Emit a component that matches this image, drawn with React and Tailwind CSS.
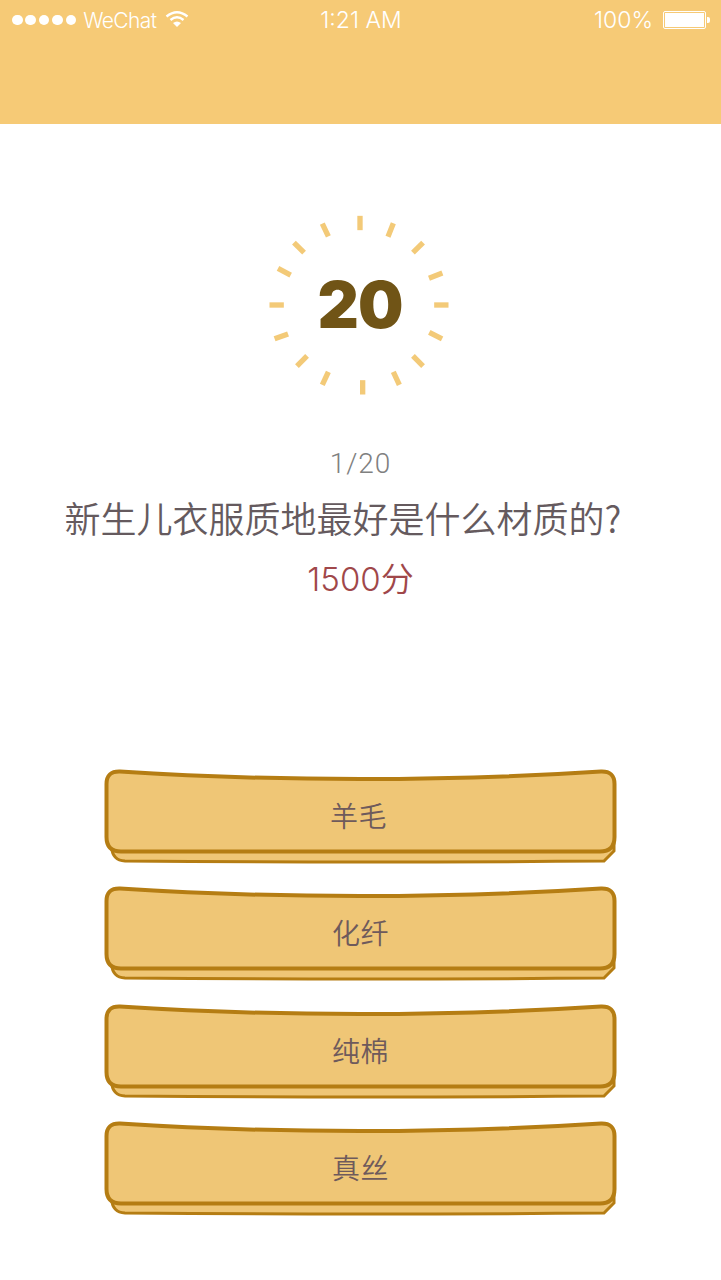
const ticks = [
  [300, 54, 0], [392, 75, 22], [474, 128, 45], [527, 212, 69], [544, 300, 90], [527, 392, 117],
  [474, 468, 135], [409, 520, 155], [308, 547, 180], [196, 520, 205], [126, 468, 225], [64, 394, 250],
  [50, 300, 270], [73, 200, 298], [117, 128, 315], [196, 75, 335],
];

function Timer() {
  return (
    <div className="relative w-[200px] h-[200px] flex items-center justify-center">
      <svg className="absolute inset-0" width="200" height="200" viewBox="0 0 600 600">
        {ticks.map(([x, y, r], i) => (
          <rect key={i} x={x - 8} y={y - 21.5} width="16" height="43" fill="#f3ca78" transform={`rotate(${r} ${x} ${y})`} />
        ))}
      </svg>
      <span className="relative text-[64px] leading-none font-black text-[#705416] tracking-[-1px]" style={{ fontFamily: "Inter, sans-serif" }}>20</span>
    </div>
  );
}

function Answer({ label, labelClass }) {
  return (
    <div className="relative w-[520px] h-[96px] flex items-center justify-center">
      <svg className="absolute inset-0" width="520" height="96" viewBox="0 0 520 96" fill="none">
        <path d="M10.5 62 L10.5 78 Q11.5 91.5 24 92 Q260 94 503 92 L513 82 L513 62 Z" fill="#efc676" stroke="#b57d13" strokeWidth="3" />
        <path d="M19 2.5 Q135 10 259 10 Q385 10 500 2.5 Q513.5 2 513.5 15 L513.5 68 Q513.5 82.5 499 82.5 L20 82.5 Q5.5 82.5 5.5 68 L5.5 15 Q5.5 2 19 2.5 Z" fill="#efc676" stroke="#b57d13" strokeWidth="4" />
      </svg>
      <span className={`relative mt-[-4px] text-[28px] leading-none text-[#6e5a5c] tracking-[0.5px] font-[350] ${labelClass || ""}`}>{label}</span>
    </div>
  );
}

export default function App() {
  return (
    <div className="w-[721px] h-[1280px] bg-white overflow-hidden" style={{ fontFamily: '"Noto Sans CJK SC", sans-serif' }}>
      <header className="h-[124px] bg-[#f6ca76] text-white">
        <div className="h-[40px] pl-[12px] pr-[11px] grid grid-cols-3 items-center font-light text-[23px] leading-none" style={{ fontFamily: "Inter, sans-serif" }}>
          <div className="flex items-center whitespace-nowrap">
            <div className="flex gap-[2.8px]">
              {[0, 1, 2, 3, 4].map((i) => <span key={i} className="w-[10.6px] h-[10.6px] rounded-full bg-white" />)}
            </div>
            <span className="ml-[7px] text-[21px] tracking-[-0.6px]">WeChat</span>
            <svg className="ml-[9px] mb-[3px]" width="24" height="18" viewBox="0 0 24 18" fill="none" stroke="white" strokeWidth="2.4">
              <path d="M1.5 6.5 Q12 -2 22.5 6.5" />
              <path d="M5.5 10 Q12 4.5 18.5 10" />
              <path d="M12 17 L8 13 Q12 10 16 13 Z" fill="white" stroke="none" />
            </svg>
          </div>
          <div className="text-center">1:21 AM</div>
          <div className="flex items-center justify-end">
            <span>100%</span>
            <div className="ml-[10px] w-[43px] h-[18px] border border-white rounded-[2px] p-[1px] mb-[1px]">
              <div className="w-full h-full bg-white" />
            </div>
            <div className="w-[3px] h-[6px] bg-white rounded-r-[2px] ml-[1px]" />
          </div>
        </div>
      </header>

      <main className="flex flex-col items-center">
        <div className="mt-[81px] ml-[-1px]"><Timer /></div>
        <div className="mt-[40px] text-[28px] leading-[38px] text-[#808080] font-light tracking-[1px]" style={{ fontFamily: "Roboto, sans-serif" }}>1/20</div>
        <div className="mt-[9px] mr-[35px] text-[36px] leading-[50px] text-[#655a5e] font-[350]">新生儿衣服质地最好是什么材质的?</div>
        <div className="mt-[12px] text-[33px] leading-[50px] text-[#a0474a] font-[350]" style={{ fontFamily: '"Inter", "Noto Sans CJK SC", sans-serif' }}>1500分</div>
        <div className="mt-[165px] flex flex-col gap-[21.3px]">
          <Answer label="羊毛" labelClass="mr-[4px]" />
          <Answer label="化纤" />
          <Answer label="纯棉" />
          <Answer label="真丝" />
        </div>
      </main>
    </div>
  );
}
